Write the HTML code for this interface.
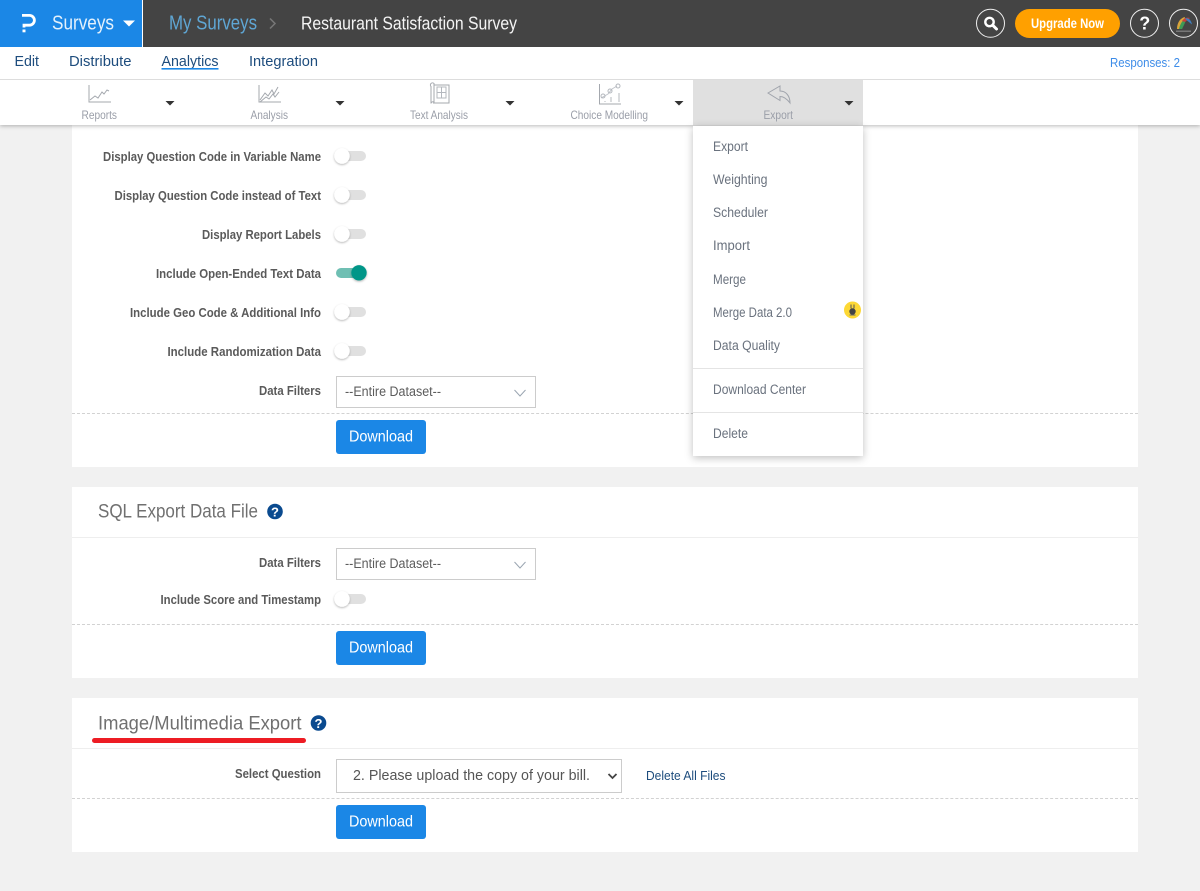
<!DOCTYPE html>
<html lang="en">
<head>
<meta charset="utf-8">
<title>Restaurant Satisfaction Survey - Export</title>
<style>
html,body{margin:0;padding:0;width:1200px;height:891px;overflow:hidden;background:#f1f1f1}
.b{position:absolute;box-sizing:border-box}
svg{position:absolute;left:0;top:0}
text{font-family:"Liberation Sans",sans-serif;white-space:pre}
.lab{font-size:13px;font-weight:bold;fill:#5a5a5a}
.nav{font-size:15px;fill:#1d4c7d}
.tool{font-size:12px;fill:#9a9ea8}
.menu{font-size:13.5px;fill:#6a727e}
.sel{font-size:13.5px;fill:#5c5c5c}
.btn{font-size:16px;fill:#fff}
.h{font-size:19.5px;fill:#707070}
.ic{fill:none;stroke:#a4a8ae;stroke-width:1}
</style>
</head>
<body>
<div class="b" style="left:72px;top:120px;width:1066px;height:347px;background:#fff"></div>
<div class="b" style="left:72px;top:487px;width:1066px;height:191px;background:#fff"></div>
<div class="b" style="left:72px;top:698px;width:1066px;height:154px;background:#fff"></div>
<div class="b" style="left:72px;top:537px;width:1066px;height:1px;background:#eee"></div>
<div class="b" style="left:72px;top:748px;width:1066px;height:1px;background:#eee"></div>
<div class="b" style="left:72px;top:413px;width:1066px;border-top:1px dashed #d2d2d2"></div>
<div class="b" style="left:72px;top:624px;width:1066px;border-top:1px dashed #d2d2d2"></div>
<div class="b" style="left:72px;top:798px;width:1066px;border-top:1px dashed #d2d2d2"></div>
<div class="b" style="left:336px;top:376px;width:200px;height:32px;background:#fff;border:1px solid #ccc"></div>
<div class="b" style="left:336px;top:548px;width:200px;height:32px;background:#fff;border:1px solid #ccc"></div>
<div class="b" style="left:336px;top:759px;width:286px;height:34px;background:#fff;border:1px solid #ccc"></div>
<div class="b" style="left:336px;top:420px;width:90px;height:34px;background:#1b87e6;border-radius:3px"></div>
<div class="b" style="left:336px;top:631px;width:90px;height:34px;background:#1b87e6;border-radius:3px"></div>
<div class="b" style="left:336px;top:805px;width:90px;height:34px;background:#1b87e6;border-radius:3px"></div>
<div class="b" style="left:0;top:80px;width:1200px;height:45px;background:#fff;box-shadow:0 1px 4px rgba(0,0,0,.28)"></div>
<div class="b" style="left:0;top:47px;width:1200px;height:33px;background:#fff;border-bottom:1px solid #ddd"></div>
<div class="b" style="left:0;top:0;width:1200px;height:47px;background:#444"></div>
<div class="b" style="left:0;top:0;width:142px;height:47px;background:#1b87e6"></div>
<div class="b" style="left:142px;top:0;width:1px;height:47px;background:#fff"></div>
<div class="b" style="left:693px;top:80px;width:170px;height:45px;background:#e0e0e0"></div>
<div class="b" style="left:693px;top:126px;width:170px;height:330px;background:#fff;box-shadow:0 2px 8px rgba(0,0,0,.25)"></div>
<div class="b" style="left:693px;top:368px;width:170px;height:1px;background:#e4e4e4"></div>
<div class="b" style="left:693px;top:412px;width:170px;height:1px;background:#e4e4e4"></div>
<div class="b" style="left:1015px;top:9px;width:105px;height:29px;background:#ffa000;border-radius:15px"></div>

<svg width="1200" height="891" viewBox="0 0 1200 891" xmlns="http://www.w3.org/2000/svg">
<defs>
<filter id="s" x="-50%" y="-50%" width="200%" height="200%"><feDropShadow dx="0" dy="1" stdDeviation="1" flood-color="#000" flood-opacity=".3"/></filter>
</defs>

<!-- header -->
<path d="M22 15.400H29.500a4.900 4.900 0 0 1 0 9.800H24V27.500" fill="none" stroke="#fff" stroke-width="2.800"/>
<rect x="22.500" y="29.500" width="3" height="2.800" fill="#fff"/>
<text x="52" y="29.500" font-size="20" fill="#e4f1fc" textLength="62" lengthAdjust="spacingAndGlyphs">Surveys</text>
<path d="M123 20.500h12l-6 6z" fill="#fff"/>
<text x="169" y="29.500" font-size="20" fill="#5fa6d4" textLength="88" lengthAdjust="spacingAndGlyphs">My Surveys</text>
<path d="M270 18.500l5 5-5 5" fill="none" stroke="#777" stroke-width="1.500"/>
<text x="301" y="29.500" font-size="18.500" fill="#f4f4f4" textLength="216" lengthAdjust="spacingAndGlyphs">Restaurant Satisfaction Survey</text>

<circle cx="990.500" cy="23.300" r="14" fill="none" stroke="#eee" stroke-width="1"/>
<circle cx="989.500" cy="22" r="4.200" fill="none" stroke="#fff" stroke-width="2.400"/>
<path d="M992.700 25.200l3.800 3.800" stroke="#fff" stroke-width="3" stroke-linecap="round"/>
<text x="1031" y="28" font-size="14" font-weight="bold" fill="#fff" textLength="73" lengthAdjust="spacingAndGlyphs">Upgrade Now</text>
<circle cx="1144.500" cy="23.300" r="14" fill="none" stroke="#eee" stroke-width="1"/>
<text x="1139.300" y="29.500" font-size="18" font-weight="bold" fill="#fff">?</text>
<circle cx="1183.500" cy="23.300" r="14" fill="none" stroke="#eee" stroke-width="1"/>
<path d="M1177 29c0-6 3-11 8-12l-3 12z" fill="#d9a43a"/>
<path d="M1179 29c1-5 4-10 8-11l-3 7-2 4z" fill="#3f9a55"/>
<path d="M1182 21c2-3 5-4 8-3l-5 4z" fill="#c83d3d"/>
<path d="M1185 18.500c3-1 6 1 7 6l-5-4z" fill="#3f7fc0"/>
<rect x="1176" y="30.500" width="15" height="1.500" fill="#777"/>

<!-- nav -->
<text class="nav" x="14.500" y="66" textLength="24.500" lengthAdjust="spacingAndGlyphs">Edit</text>
<text class="nav" x="69" y="66" textLength="62.500" lengthAdjust="spacingAndGlyphs">Distribute</text>
<text class="nav" x="161.500" y="66" textLength="57" lengthAdjust="spacingAndGlyphs">Analytics</text>
<rect x="161.500" y="68" width="57" height="1.600" fill="#1b87e6"/>
<text class="nav" x="249" y="66" textLength="69" lengthAdjust="spacingAndGlyphs">Integration</text>
<text x="1110" y="67" font-size="13" fill="#3d8ce8" textLength="70" lengthAdjust="spacingAndGlyphs">Responses: 2</text>

<!-- toolbar icons -->
<path class="ic" d="M89 85V102H111"/>
<path class="ic" d="M90 100l5-4 3 2 4-6 2 2 3-4 2 1"/>
<path class="ic" d="M259 85V102H281"/>
<path class="ic" d="M260 100l5-7 3 3 4-6 2 4 4-7"/>
<path class="ic" d="M260 102l6-5 3 2 4-5 2 3 4-5"/>
<path class="ic" d="M431 86.500a2 2 0 0 1 3-3V102a2 2 0 0 0-3 1.500V86.500zM434 85H449V103H433"/>
<rect x="437" y="87" width="9" height="11" fill="none" stroke="#b4b8be"/>
<path d="M437 92.500h9M441.500 87v11" fill="none" stroke="#b4b8be"/>
<path class="ic" d="M599.500 84V104H621"/>
<path d="M601 98l7-4 4-5 5-3" fill="none" stroke="#c0c4ca"/>
<circle cx="603" cy="96" r="2" fill="none" stroke="#b4b8be"/><circle cx="610" cy="91" r="2" fill="none" stroke="#b4b8be"/><circle cx="618" cy="86" r="2" fill="none" stroke="#b4b8be"/>
<path d="M611 97v5M619 93v9M605 101v1" fill="none" stroke="#b4b8be"/>
<path d="M768 93L780 86V91C786 91 790 96 790 103C787 99 784 96.500 780 96.500V100.500Z" fill="none" stroke="#a0a4ac" stroke-width="1"/>
<path d="M165.500 101h9l-4.500 4.500zM335.500 101h9l-4.500 4.500zM505.500 101h9l-4.500 4.500zM674.500 101h9l-4.500 4.500zM844.500 101h9l-4.500 4.500z" fill="#333"/>
<text class="tool" x="81.500" y="119" textLength="35.500" lengthAdjust="spacingAndGlyphs">Reports</text>
<text class="tool" x="250.500" y="119" textLength="37.500" lengthAdjust="spacingAndGlyphs">Analysis</text>
<text class="tool" x="410" y="119" textLength="58" lengthAdjust="spacingAndGlyphs">Text Analysis</text>
<text class="tool" x="570.500" y="119" textLength="77.500" lengthAdjust="spacingAndGlyphs">Choice Modelling</text>
<text class="tool" x="763.500" y="119" textLength="29.500" lengthAdjust="spacingAndGlyphs">Export</text>

<!-- labels panel 1 -->
<text class="lab" x="103" y="161" textLength="218" lengthAdjust="spacingAndGlyphs">Display Question Code in Variable Name</text>
<text class="lab" x="114.500" y="200" textLength="206.500" lengthAdjust="spacingAndGlyphs">Display Question Code instead of Text</text>
<text class="lab" x="202" y="239" textLength="119" lengthAdjust="spacingAndGlyphs">Display Report Labels</text>
<text class="lab" x="156" y="278" textLength="165" lengthAdjust="spacingAndGlyphs">Include Open-Ended Text Data</text>
<text class="lab" x="130" y="317" textLength="191" lengthAdjust="spacingAndGlyphs">Include Geo Code &amp; Additional Info</text>
<text class="lab" x="167.500" y="356" textLength="153.500" lengthAdjust="spacingAndGlyphs">Include Randomization Data</text>
<text class="lab" x="259" y="395" textLength="62" lengthAdjust="spacingAndGlyphs">Data Filters</text>

<!-- toggles -->
<rect x="336" y="151" width="30" height="10" rx="5" fill="#e0e0e0"/><circle cx="342" cy="156" r="7.700" fill="#fff" filter="url(#s)"/>
<rect x="336" y="190" width="30" height="10" rx="5" fill="#e0e0e0"/><circle cx="342" cy="195" r="7.700" fill="#fff" filter="url(#s)"/>
<rect x="336" y="229" width="30" height="10" rx="5" fill="#e0e0e0"/><circle cx="342" cy="234" r="7.700" fill="#fff" filter="url(#s)"/>
<rect x="336" y="268" width="30" height="10" rx="5" fill="#6fbfb3"/><circle cx="359" cy="272.800" r="7.700" fill="#009688" filter="url(#s)"/>
<rect x="336" y="307" width="30" height="10" rx="5" fill="#e0e0e0"/><circle cx="342" cy="312" r="7.700" fill="#fff" filter="url(#s)"/>
<rect x="336" y="346" width="30" height="10" rx="5" fill="#e0e0e0"/><circle cx="342" cy="351" r="7.700" fill="#fff" filter="url(#s)"/>
<rect x="336" y="594" width="30" height="10" rx="5" fill="#e0e0e0"/><circle cx="342" cy="599" r="7.700" fill="#fff" filter="url(#s)"/>

<text class="sel" x="345" y="396" textLength="96" lengthAdjust="spacingAndGlyphs">--Entire Dataset--</text>
<path d="M514.500 390l5.500 6 5.500-6" fill="none" stroke="#9aa5b1" stroke-width="1"/>
<text class="btn" x="349" y="441.500" textLength="64" lengthAdjust="spacingAndGlyphs">Download</text>

<!-- panel 2 -->
<text class="h" x="98" y="517.500" textLength="160" lengthAdjust="spacingAndGlyphs">SQL Export Data File</text>
<circle cx="275" cy="511.500" r="7.800" fill="#0a4a8f"/>
<text x="271" y="516.500" font-size="13" font-weight="bold" fill="#fff">?</text>
<text class="lab" x="259" y="567" textLength="62" lengthAdjust="spacingAndGlyphs">Data Filters</text>
<text class="sel" x="345" y="568" textLength="96" lengthAdjust="spacingAndGlyphs">--Entire Dataset--</text>
<path d="M514.500 562l5.500 6 5.500-6" fill="none" stroke="#9aa5b1" stroke-width="1"/>
<text class="lab" x="160.500" y="604" textLength="160.500" lengthAdjust="spacingAndGlyphs">Include Score and Timestamp</text>
<text class="btn" x="349" y="652.500" textLength="64" lengthAdjust="spacingAndGlyphs">Download</text>

<!-- panel 3 -->
<text class="h" x="98" y="729.500" textLength="203.500" lengthAdjust="spacingAndGlyphs">Image/Multimedia Export</text>
<circle cx="318.500" cy="723" r="7.800" fill="#0a4a8f"/>
<text x="314.500" y="728" font-size="13" font-weight="bold" fill="#fff">?</text>
<rect x="92" y="738" width="214" height="5" rx="2.500" fill="#ed1c24"/>
<text class="lab" x="235" y="778" textLength="86" lengthAdjust="spacingAndGlyphs">Select Question</text>
<text x="353" y="780" font-size="15" fill="#555" textLength="237" lengthAdjust="spacingAndGlyphs">2. Please upload the copy of your bill.</text>
<path d="M608.500 774l4 4 4-4" fill="none" stroke="#444" stroke-width="1.800"/>
<text x="646" y="780" font-size="13" fill="#1d4c7d" textLength="79.500" lengthAdjust="spacingAndGlyphs">Delete All Files</text>
<text class="btn" x="349" y="826.500" textLength="64" lengthAdjust="spacingAndGlyphs">Download</text>

<!-- menu -->
<text class="menu" x="713" y="151" textLength="35" lengthAdjust="spacingAndGlyphs">Export</text>
<text class="menu" x="713" y="184" textLength="54.500" lengthAdjust="spacingAndGlyphs">Weighting</text>
<text class="menu" x="713" y="217" textLength="55" lengthAdjust="spacingAndGlyphs">Scheduler</text>
<text class="menu" x="713" y="250" textLength="37" lengthAdjust="spacingAndGlyphs">Import</text>
<text class="menu" x="713" y="284" textLength="33" lengthAdjust="spacingAndGlyphs">Merge</text>
<text class="menu" x="713" y="317" textLength="79" lengthAdjust="spacingAndGlyphs">Merge Data 2.0</text>
<text class="menu" x="713" y="350" textLength="67" lengthAdjust="spacingAndGlyphs">Data Quality</text>
<text class="menu" x="713" y="394" textLength="93" lengthAdjust="spacingAndGlyphs">Download Center</text>
<text class="menu" x="713" y="438" textLength="35" lengthAdjust="spacingAndGlyphs">Delete</text>
<circle cx="852.500" cy="310" r="8.500" fill="#fdd835"/>
<path d="M851 304.500v4M854 304.500v4" fill="none" stroke="#555" stroke-width="1"/>
<circle cx="852.500" cy="311.500" r="3.200" fill="#444"/>
<path d="M849.500 315h6" stroke="#666" stroke-width="1"/>
</svg>
</body>
</html>
